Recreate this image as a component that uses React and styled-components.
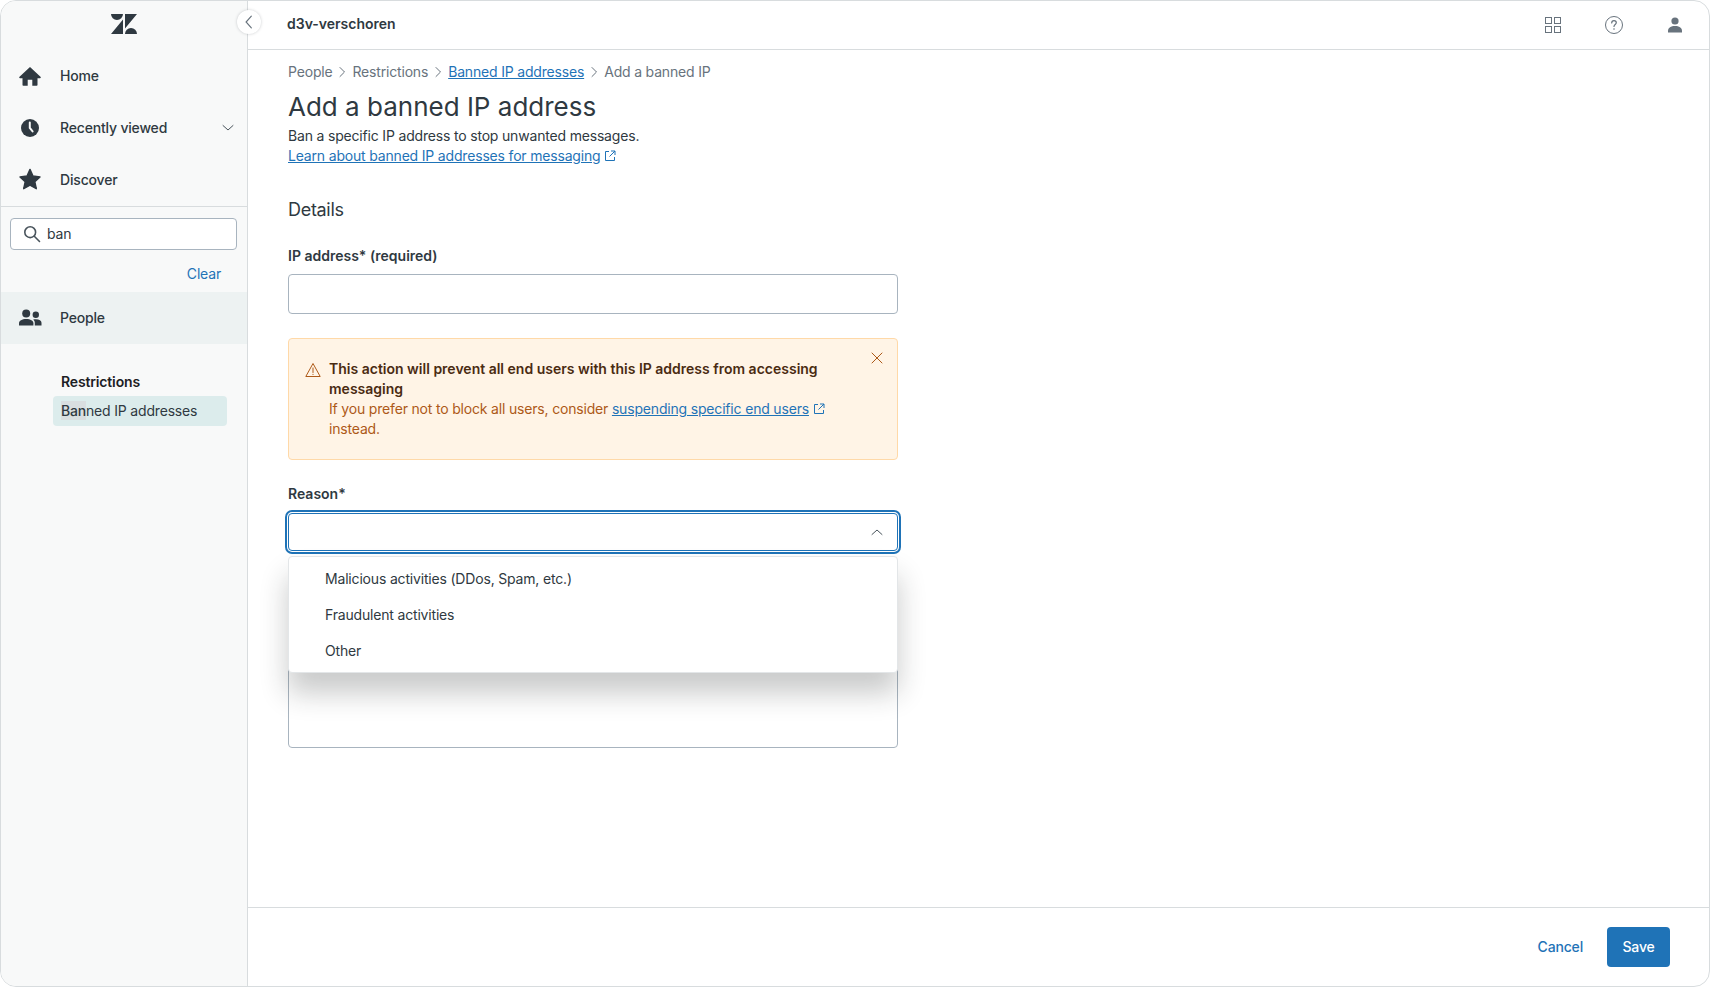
//  ----------------------------------------------------------------------------
//  Dependencies
//  ----------------------------------------------------------------------------
import React from 'react';
import styled, { createGlobalStyle } from 'styled-components';


//  ----------------------------------------------------------------------------
//  Styles
//  ----------------------------------------------------------------------------
const Global = createGlobalStyle`
    html, body {
        background: #fff;
        height: 987px;
        margin: 0;
        overflow: hidden;
        padding: 0;
    }
    * {
        box-sizing: border-box;
    }
    body {
        color: #2f3941;
        font-family: Inter, "Liberation Sans", sans-serif;
        font-size: 14px;
        letter-spacing: -0.18px;
        line-height: 20px;
        -webkit-font-smoothing: antialiased;
    }
`;

const Frame = styled.div`
    background: #fff;
    border: 1px solid #d8dcde;
    border-radius: 16px;
    display: flex;
    height: 987px;
    overflow: hidden;
    position: relative;
    width: 1710px;
`;

const Sidebar = styled.aside`
    background: #f8f9f9;
    border-right: 1px solid #d8dcde;
    display: flex;
    flex: 0 0 247px;
    flex-direction: column;
`;

const LogoBar = styled.div`
    align-items: center;
    display: flex;
    height: 49px;
    justify-content: center;
    padding-bottom: 3px;
`;

const Nav = styled.nav`
    border-bottom: 1px solid #d8dcde;
    display: flex;
    flex-direction: column;
    height: 157px;
`;

const NavRow = styled.div`
    align-items: center;
    background: ${(p) => (p.$active ? '#edf2f2' : 'transparent')};
    color: #2f3941;
    display: flex;
    flex: 0 0 52px;
    font-size: 14px;
    font-weight: 500;
    gap: 18px;
    padding: 0 13px 0 17px;
`;

const NavIcon = styled.span`
    display: flex;
    flex: 0 0 24px;
    justify-content: center;
`;

const NavLabel = styled.span`
    flex: 1;
`;

const SearchWrap = styled.div`
    padding: 11px 10px 0 9px;
`;

const SearchBox = styled.div`
    align-items: center;
    background: #fff;
    border: 1px solid #a8b4bf;
    border-radius: 4px;
    display: flex;
    gap: 6px;
    height: 32px;
    padding: 0 12px;
`;

const SearchText = styled.span`
    color: #2f3941;
    font-size: 14px;
`;

const ClearRow = styled.div`
    display: flex;
    height: 42px;
    justify-content: flex-end;
    padding: 14px 26px 0 0;
`;

const ClearLink = styled.span`
    color: #1f73b7;
    font-size: 14px;
`;

const SubNav = styled.div`
    display: flex;
    flex-direction: column;
    padding: 28px 20px 0 52px;
`;

const SubTitle = styled.div`
    color: #1c2024;
    font-size: 14px;
    font-weight: 600;
    height: 24px;
    letter-spacing: -0.15px;
    line-height: 20px;
    padding-left: 8px;
`;

const SubItem = styled.div`
    align-items: center;
    background: #dcecec;
    border-radius: 4px;
    display: flex;
    font-size: 14px;
    height: 30px;
    padding-left: 8px;
`;

const Match = styled.span`
    background: #d9dee0;
    display: inline-block;
    font-weight: 500;
    line-height: 19px;
`;

const Main = styled.main`
    display: flex;
    flex: 1;
    flex-direction: column;
    min-width: 0;
`;

const TopBar = styled.header`
    align-items: center;
    border-bottom: 1px solid #d8dcde;
    display: flex;
    flex: 0 0 49px;
    justify-content: space-between;
    padding: 0 26px 1px 39px;
`;

const Brand = styled.span`
    color: #2f3941;
    font-size: 14px;
    font-weight: 600;
    letter-spacing: 0;
    margin-top: -2px;
`;

const TopIcons = styled.div`
    align-items: center;
    display: flex;
    gap: 44px;
`;

const Collapse = styled.button`
    align-items: center;
    background: #fff;
    border: none;
    border-radius: 50%;
    box-shadow: 0 0 3px rgba(47, 57, 65, 0.25);
    display: flex;
    height: 24px;
    justify-content: center;
    left: 236px;
    padding: 0;
    position: absolute;
    top: 9px;
    width: 24px;
`;

const Content = styled.section`
    display: flex;
    flex: 1;
    flex-direction: column;
    min-height: 0;
    padding: 12px 40px 0 40px;
`;

const Crumbs = styled.div`
    align-items: center;
    color: #68737d;
    display: flex;
    font-size: 14px;
    gap: 4px;
    height: 20px;
`;

const Link = styled.a`
    color: #1f73b7;
    text-decoration: underline;
`;

const Title = styled.h1`
    color: #2f3941;
    font-size: 26px;
    font-weight: 400;
    letter-spacing: 0;
    line-height: 32px;
    margin: 9px 0 0;
`;

const Intro = styled.p`
    color: #2f3941;
    font-size: 14px;
    line-height: 20px;
    margin: 3px 0 0;
`;

const LinkLine = styled.div`
    align-items: center;
    display: flex;
    font-size: 14px;
    gap: 4px;
    height: 20px;
`;

const Section = styled.h2`
    color: #2f3941;
    font-size: 18px;
    font-weight: 400;
    letter-spacing: -0.3px;
    line-height: 24px;
    margin: 32px 0 0;
`;

const Form = styled.div`
    display: flex;
    flex-direction: column;
    width: 610px;
`;

const Label = styled.label`
    color: #2f3941;
    display: block;
    font-size: 14px;
    font-weight: 600;
    letter-spacing: 0;
    line-height: 20px;
    margin-top: 24px;
`;

const Input = styled.div`
    background: #fff;
    border: 1px solid #a8b4bf;
    border-radius: 4px;
    height: 40px;
    margin-top: 8px;
`;

const Alert = styled.div`
    background: #fff4e6;
    border: 1px solid #ffd9a8;
    border-radius: 4px;
    display: flex;
    gap: 8px;
    height: 122px;
    margin-top: 24px;
    padding: 20px 56px 0 16px;
    position: relative;
`;

const AlertBody = styled.div`
    color: #ad5918;
    font-size: 14px;
    line-height: 20px;
`;

const AlertHead = styled.div`
    color: #4a2b12;
    font-weight: 600;
    letter-spacing: 0;
`;

const AlertLink = styled(Link)`
    margin-right: 4px;
`;

const AlertClose = styled.span`
    display: flex;
    position: absolute;
    right: 14px;
    top: 13px;
`;

const SelectWrap = styled.div`
    margin-top: 7px;
    position: relative;
`;

const Select = styled.div`
    align-items: center;
    background: #fff;
    border: 1px solid #1f73b7;
    border-radius: 4px;
    box-shadow: 0 0 0 1px #fff, 0 0 0 3px #1f73b7;
    display: flex;
    height: 38px;
    justify-content: flex-end;
    margin: 2px 0;
    padding-right: 14px;
`;

const Menu = styled.ul`
    background: #fff;
    border: 1px solid #e3e6e8;
    border-radius: 4px;
    box-shadow: 0 20px 28px rgba(30, 35, 35, 0.24);
    left: 0;
    list-style: none;
    margin: 0;
    padding: 4px 0 3px;
    position: absolute;
    right: 0;
    top: 45px;
    z-index: 2;
`;

const MenuItem = styled.li`
    align-items: center;
    color: #2f3941;
    display: flex;
    font-size: 14px;
    height: 36px;
    padding-left: 36px;
`;

const Textarea = styled.div`
    background: #fff;
    border: 1px solid #a8b4bf;
    border-radius: 4px;
    height: 148px;
    margin-top: 47px;
`;

const Footer = styled.footer`
    align-items: center;
    border-top: 1px solid #d8dcde;
    display: flex;
    flex: 0 0 79px;
    gap: 24px;
    justify-content: flex-end;
    padding: 0 39px 0 0;
`;

const TextButton = styled.button`
    background: none;
    border: none;
    color: #1f73b7;
    font: inherit;
    font-weight: 500;
    letter-spacing: inherit;
    padding: 0;
`;

const SaveButton = styled.button`
    background: #1f73b7;
    border: none;
    border-radius: 4px;
    color: #fff;
    font: inherit;
    font-weight: 500;
    height: 40px;
    letter-spacing: inherit;
    padding: 0;
    width: 63px;
`;


//  ----------------------------------------------------------------------------
//  Icons
//  ----------------------------------------------------------------------------
const Logo = () => (
    <svg width="26" height="20" viewBox="0 0 26 20" fill="#2f3941">
        <path d="M12 5.5V20H0L12 5.5zM12 0a6 6 0 0 1-12 0h12zM14 20a6 6 0 0 1 12 0H14zM14 14.5V0h12L14 14.5z" />
    </svg>
);

const Home = () => (
    <svg width="24" height="24" viewBox="0 0 24 24" fill="#2f3941">
        <path d="M12 3 1 13.2l.9 1H4.5V21a.8.8 0 0 0 .8.8h4.4v-6.1h4.6v6.1h4.4a.8.8 0 0 0 .8-.8v-6.8h2.6l.9-1L12 3z" />
    </svg>
);

const Clock = () => (
    <svg width="24" height="24" viewBox="0 0 24 24">
        <circle cx="12" cy="12" r="9" fill="#2f3941" />
        <path d="M11.8 6.5V12l2.8 3.4" fill="none" stroke="#f8f9f9" strokeWidth="2" strokeLinecap="round" />
    </svg>
);

const Star = () => (
    <svg width="24" height="24" viewBox="0 1 24 24" fill="#2f3941" stroke="#2f3941" strokeWidth="1.4" strokeLinejoin="round">
        <path d="M12 2.4l3 6.600 7 .9-5.200 4.800 1.500 7L12 18.200l-6.300 3.500 1.500-7L2 9.900l7-.9 3-6.600z" />
    </svg>
);

const People = () => (
    <svg width="24" height="24" viewBox="0 0 24 24" fill="#2f3941">
        <circle cx="8.2" cy="7.6" r="4" />
        <circle cx="17.8" cy="8.8" r="3.2" />
        <path d="M1 19.5v-2.3C1 14.8 4 13 8.2 13s7.2 1.8 7.2 4.2v2.3H1z" />
        <path d="M16.8 19.5v-2.6c0-1.300-.6-2.400-1.600-3.300.8-.2 1.700-.3 2.600-.3 3.500 0 5.700 1.500 5.700 3.500v2.700h-6.700z" />
    </svg>
);

const SearchIcon = () => (
    <svg width="18" height="18" viewBox="0 0 18 18" fill="none" stroke="#49545c" strokeWidth="1.6">
        <circle cx="7.2" cy="7.2" r="5.4" />
        <path d="M11.300 11.300 16.500 16.500" strokeLinecap="round" />
    </svg>
);

const Chevron = ({ dir = 'down', size = 12, color = '#49545c' }) => (
    <svg width={size} height={size} viewBox="0 0 12 12" fill="none" stroke={color} strokeWidth="1" strokeLinecap="round">
        {dir === 'down' && <path d="M1 3.500 6 8l5-4.500" />}
        {dir === 'up' && <path d="M1 8.500 6 4l5 4.500" />}
        {dir === 'left' && <path d="M8 1 3.500 6 8 11" />}
        {dir === 'right' && <path d="M4 1.500 8.500 6 4 10.500" />}
    </svg>
);

const External = () => (
    <svg width="12" height="12" viewBox="0 0 12 12" fill="none" stroke="#1f73b7" style={{ verticalAlign: '-1px' }}>
        <path d="M5 1.500H1.500v9h9V7M7 1h4v4M11 1 5.500 6.500" />
    </svg>
);

const Grid = () => (
    <svg width="16" height="16" viewBox="0 0 16 16" fill="none" stroke="#68737d">
        <rect x=".5" y=".5" width="6" height="6" />
        <rect x="9.500" y=".5" width="6" height="6" />
        <rect x=".5" y="9.500" width="6" height="6" />
        <rect x="9.500" y="9.500" width="6" height="6" />
    </svg>
);

const Help = () => (
    <svg width="18" height="18" viewBox="0 0 18 18" fill="none" stroke="#68737d">
        <circle cx="9" cy="9" r="8.500" />
        <path d="M6.700 7c0-1.400 1-2.300 2.300-2.300s2.300.9 2.300 2.100c0 1.700-2.300 1.800-2.300 3.700" strokeLinecap="round" strokeWidth="1.200" />
        <circle cx="9" cy="13" r=".8" fill="#68737d" stroke="none" />
    </svg>
);

const User = () => (
    <svg width="16" height="16" viewBox="0 0 16 16" fill="#68737d">
        <circle cx="8" cy="4" r="3.600" />
        <path d="M1 15.500v-1.700C1 10.800 4 9 8 9s7 1.800 7 4.800v1.700H1z" />
    </svg>
);

const Warning = () => (
    <svg width="16" height="16" viewBox="0 0 16 16" fill="none" stroke="#ad5918" style={{ flex: '0 0 16px', marginTop: '3px' }}>
        <path d="M8 1.500 15.200 14.500H.8L8 1.500z" strokeLinejoin="round" />
        <path d="M8 6v4.500" strokeLinecap="round" />
        <circle cx="8" cy="12.300" r=".6" fill="#ad5918" stroke="none" />
    </svg>
);

const Close = () => (
    <svg width="12" height="12" viewBox="0 0 12 12" fill="none" stroke="#ad5918" strokeLinecap="round">
        <path d="M1 1l10 10M11 1 1 11" />
    </svg>
);


//  ----------------------------------------------------------------------------
//  Container
//  ----------------------------------------------------------------------------
const crumbArrow = <Chevron dir="right" size={12} color="#68737d" />;

const App = () => {
    return (
        <Frame>
            <Global />
            <Sidebar>
                <LogoBar><Logo /></LogoBar>
                <Nav>
                    <NavRow><NavIcon><Home /></NavIcon><NavLabel>Home</NavLabel></NavRow>
                    <NavRow>
                        <NavIcon><Clock /></NavIcon>
                        <NavLabel>Recently viewed</NavLabel>
                        <Chevron />
                    </NavRow>
                    <NavRow><NavIcon><Star /></NavIcon><NavLabel>Discover</NavLabel></NavRow>
                </Nav>
                <SearchWrap>
                    <SearchBox>
                        <SearchIcon />
                        <SearchText>ban</SearchText>
                    </SearchBox>
                </SearchWrap>
                <ClearRow><ClearLink>Clear</ClearLink></ClearRow>
                <NavRow $active><NavIcon><People /></NavIcon><NavLabel>People</NavLabel></NavRow>
                <SubNav>
                    <SubTitle>Restrictions</SubTitle>
                    <SubItem><span><Match>Ban</Match>ned IP addresses</span></SubItem>
                </SubNav>
            </Sidebar>
            <Collapse><Chevron dir="left" size={14} color="#68737d" /></Collapse>
            <Main>
                <TopBar>
                    <Brand>d3v-verschoren</Brand>
                    <TopIcons>
                        <Grid />
                        <Help />
                        <User />
                    </TopIcons>
                </TopBar>
                <Content>
                    <Crumbs>
                        <span>People</span>{crumbArrow}
                        <span>Restrictions</span>{crumbArrow}
                        <Link>Banned IP addresses</Link>{crumbArrow}
                        <span>Add a banned IP</span>
                    </Crumbs>
                    <Title>Add a banned IP address</Title>
                    <Intro>Ban a specific IP address to stop unwanted messages.</Intro>
                    <LinkLine><Link>Learn about banned IP addresses for messaging</Link><External /></LinkLine>
                    <Section>Details</Section>
                    <Form>
                        <Label>IP address* (required)</Label>
                        <Input />
                        <Alert>
                            <Warning />
                            <AlertBody>
                                <AlertHead>This action will prevent all end users with this IP address from accessing messaging</AlertHead>
                                If you prefer not to block all users, consider <AlertLink>suspending specific end users</AlertLink><External /> instead.
                            </AlertBody>
                            <AlertClose><Close /></AlertClose>
                        </Alert>
                        <Label>Reason*</Label>
                        <SelectWrap>
                            <Select><Chevron dir="up" /></Select>
                            <Menu>
                                <MenuItem>Malicious activities (DDos, Spam, etc.)</MenuItem>
                                <MenuItem>Fraudulent activities</MenuItem>
                                <MenuItem>Other</MenuItem>
                            </Menu>
                        </SelectWrap>
                        <Textarea />
                    </Form>
                </Content>
                <Footer>
                    <TextButton>Cancel</TextButton>
                    <SaveButton>Save</SaveButton>
                </Footer>
            </Main>
        </Frame>
    );
};

export default App;
